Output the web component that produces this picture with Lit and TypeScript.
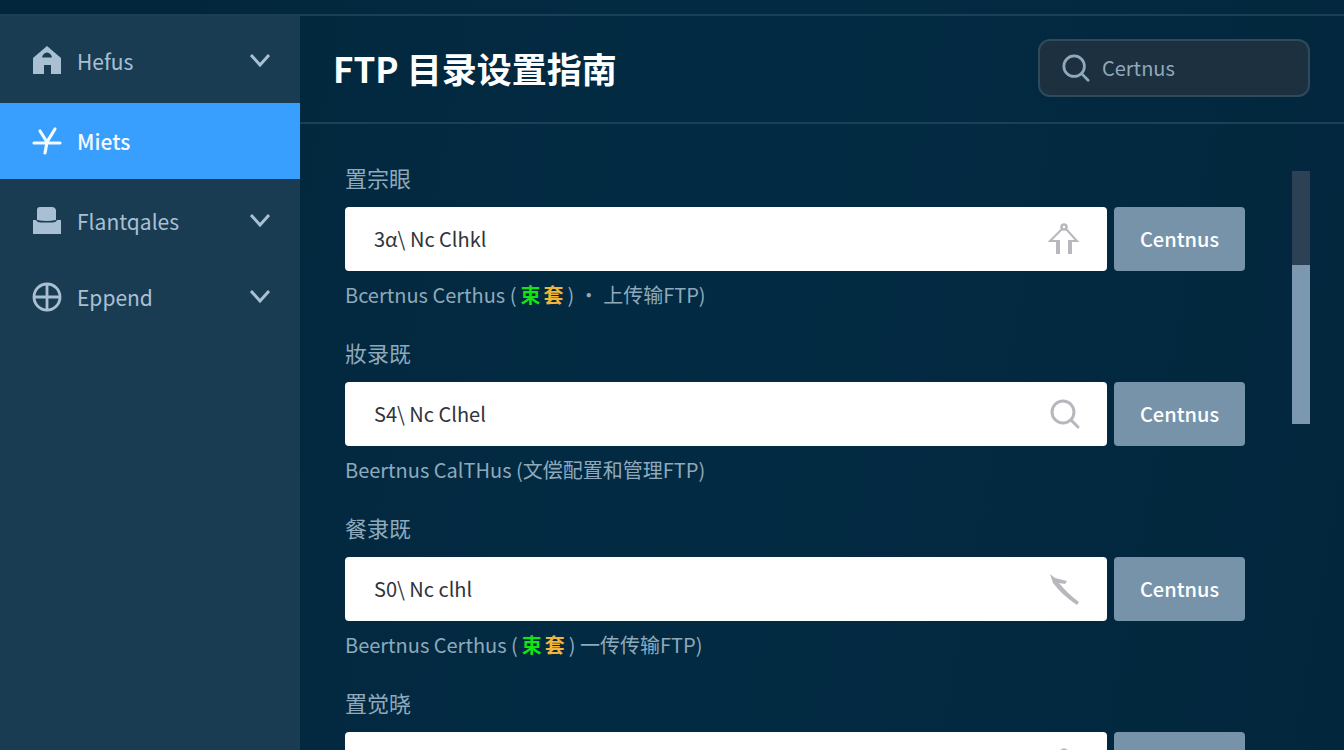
import { LitElement, html, css, svg, nothing } from "lit";
import { customElement } from "lit/decorators.js";

const icons = {
  home: svg`<path fill="currentColor" fill-rule="evenodd" d="M15 0 L29 12 V28 H19 V19 H12 V28 H1 V12 Z M10 11.500 H20 Q19 7 15 6.500 Q11 7 10 11.500 Z"/>`,
  yen: svg`<path fill="none" stroke="currentColor" stroke-width="3.200" stroke-linecap="round" d="M2 17 H28 M8 5 L15 16 M23 3 L15 16 L13 27"/>`,
  printer: svg`<path fill="currentColor" d="M5 14 V4 Q5 1 8 1 H20 Q23 1 24 4 V14 Q15 16 5 14 Z M1 14 H4 Q5 16.500 9 16.500 H20 Q24 16.500 25 14 H29 V28 H1 Z"/>`,
  globe: svg`<g fill="none" stroke="currentColor" stroke-width="2.800"><circle cx="15" cy="15" r="13"/><path d="M2 15 H28 M15 2 V28"/></g>`,
  search: svg`<g fill="none" stroke="currentColor" stroke-width="3" stroke-linecap="round"><circle cx="13" cy="13" r="11"/><path d="M21 21 L28 28"/></g>`,
  upload: svg`<g fill="none" stroke="currentColor"><circle cx="14" cy="3" r="2.500" stroke-width="2.500"/><path stroke-width="2" d="M12 5 L0 17 H8 M16 5 L27 17 H19"/><path stroke-width="4" d="M8 16 V30 M20 16 V30"/></g>`,
  arrow: svg`<path fill="currentColor" d="M0 0 L5 4 L17 7 L15 10 L9 9 Q18 20 29 28 L27 31 Q12 21 3 9 Z"/>`,
};

const icon = (name: string) =>
  html`<svg class="icon" viewBox="0 0 30 31" aria-hidden="true">${icons[name as keyof typeof icons]}</svg>`;

const navItems = [
  { label: "Hefus", icon: "home", expandable: true },
  { label: "Miets", icon: "yen", active: true },
  { label: "Flantqales", icon: "printer", expandable: true },
  { label: "Eppend", icon: "globe", expandable: true },
];

const marks = html`(<span class="marks"><span class="green">束</span><span class="amber">套</span></span>)`;

const fields = [
  { label: "置宗眼", value: "3α\\ Nc Clhkl", icon: "upload", hint: html`Bcertnus Certhus ${marks} · 上传输FTP)` },
  { label: "妝录既", value: "S4\\ Nc Clhel", icon: "search", hint: html`Beertnus CalTHus (文偿配置和管理FTP)` },
  { label: "餐隶既", value: "S0\\ Nc clhl", icon: "arrow", hint: html`Beertnus Certhus ${marks} 一传传输FTP)` },
  { label: "置觉晓", value: "", icon: "upload", hint: null },
];

@customElement("app-root")
export class AppRoot extends LitElement {
  static styles = css`
    :host {
      display: flex;
      flex-direction: column;
      box-sizing: border-box;
      height: 100vh;
      padding-top: 14px;
      overflow: hidden;
      background: linear-gradient(100deg, #02263b, #022b43 50%, #02273d);
      color: #8fa9bc;
      font-family: "Noto Sans CJK SC", sans-serif;
      font-size: 20px;
      line-height: 24px;
    }
    * {
      box-sizing: border-box;
    }
    button,
    input {
      font: inherit;
      border: 0;
      margin: 0;
    }
    .icon {
      flex: none;
      width: 30px;
      height: 31px;
      overflow: visible;
    }
    .shell {
      display: flex;
      flex: 1;
      min-height: 0;
      border-top: 2px solid #1b3f54;
    }
    .sidebar {
      flex: none;
      width: 300px;
      padding-top: 7px;
      background: #193c53;
    }
    .nav-item {
      display: flex;
      align-items: center;
      gap: 15px;
      width: 100%;
      height: 76px;
      padding: 0 28px 0 32px;
      background: none;
      color: #a9c0d3;
      font-size: 21px;
      text-align: left;
    }
    .nav-item.active {
      margin: 4px 0;
      background: #389fff;
      color: #f4faff;
      font-weight: 500;
    }
    .nav-label {
      flex: 1;
    }
    .chevron {
      width: 24px;
      height: 24px;
    }
    .main {
      display: flex;
      flex: 1;
      flex-direction: column;
      min-width: 0;
    }
    .header {
      display: flex;
      flex: none;
      align-items: center;
      justify-content: space-between;
      height: 108px;
      padding: 0 34px 2px 33px;
      border-bottom: 2px solid #1b4158;
    }
    .title {
      margin: 0;
      color: #ffffff;
      font-size: 35px;
      font-weight: 700;
      line-height: 48px;
    }
    .search {
      display: flex;
      align-items: center;
      gap: 12px;
      width: 272px;
      height: 58px;
      padding: 0 22px;
      border: 2px solid #30495b;
      border-radius: 12px;
      background: #1c303f;
    }
    .search .icon {
      width: 28px;
      height: 29px;
    }
    .search-input {
      flex: 1;
      min-width: 0;
      padding: 0;
      background: none;
      color: #8fa9bc;
    }
    .search-input::placeholder {
      color: #8fa9bc;
      opacity: 1;
    }
    .content {
      display: flex;
      flex: 1;
      gap: 47px;
      min-height: 0;
      padding: 0 34px 0 45px;
    }
    .form {
      display: flex;
      flex: 1;
      flex-direction: column;
      gap: 33px;
      min-width: 0;
      padding-top: 41px;
      overflow-y: auto;
      scrollbar-width: none;
    }
    .field-label {
      display: block;
      margin-bottom: 18px;
      font-size: 22px;
    }
    .row {
      display: flex;
      gap: 7px;
    }
    .box {
      display: flex;
      flex: 1;
      align-items: center;
      height: 64px;
      padding: 0 27px 0 29px;
      border-radius: 4px;
      background: #ffffff;
      color: #b6b8bd;
    }
    .value {
      flex: 1;
      min-width: 0;
      padding: 0;
      background: none;
      color: #30343a;
    }
    .action {
      width: 131px;
      height: 64px;
      border-radius: 4px;
      background: #7793a9;
      color: #ffffff;
      font-weight: 500;
    }
    .hint {
      margin: 12px 0 0;
      white-space: nowrap;
    }
    .marks {
      display: inline-flex;
      gap: 3px;
      padding: 0 4px;
      font-weight: 700;
    }
    .green {
      color: #12e512;
    }
    .amber {
      color: #f0b63a;
    }
    .track {
      flex: none;
      width: 18px;
      height: 253px;
      margin-top: 47px;
      padding-top: 94px;
      background: #2d4155;
    }
    .thumb {
      height: 100%;
      background: #7c97b0;
    }
  `;

  render() {
    return html`
      <div class="shell">
        <nav class="sidebar">
          ${navItems.map(
            (item) => html`
              <button class="nav-item ${item.active ? "active" : ""}">
                ${icon(item.icon)}
                <span class="nav-label">${item.label}</span>
                ${item.expandable
                  ? html`<svg class="chevron" viewBox="0 0 24 24" aria-hidden="true">
                      <path d="M3 6 L12 16 L21 6" fill="none" stroke="currentColor" stroke-width="3" />
                    </svg>`
                  : nothing}
              </button>
            `,
          )}
        </nav>
        <main class="main">
          <header class="header">
            <h1 class="title">FTP 目录设置指南</h1>
            <label class="search">
              ${icon("search")}
              <input class="search-input" type="text" aria-label="Certnus" placeholder="Certnus" />
            </label>
          </header>
          <div class="content">
            <form class="form">
              ${fields.map(
                (field, i) => html`
                  <div class="field">
                    <label class="field-label" for="field-${i}">${field.label}</label>
                    <div class="row">
                      <div class="box">
                        <input class="value" id="field-${i}" type="text" .value=${field.value} />
                        ${icon(field.icon)}
                      </div>
                      <button class="action" type="button">Centnus</button>
                    </div>
                    ${field.hint ? html`<p class="hint">${field.hint}</p>` : nothing}
                  </div>
                `,
              )}
            </form>
            <div class="track"><div class="thumb"></div></div>
          </div>
        </main>
      </div>
    `;
  }
}
